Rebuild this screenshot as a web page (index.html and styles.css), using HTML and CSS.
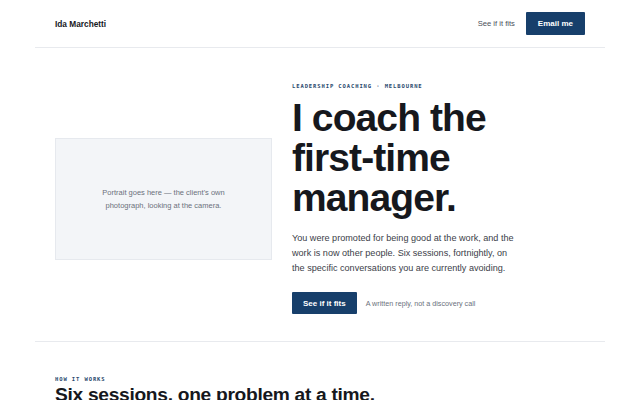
FILE: index.html
```html
<!DOCTYPE html>
<html lang="en">
<head>
<meta charset="utf-8">
<title>Ida Marchetti — Leadership coaching</title>
<link rel="stylesheet" href="styles.css">
</head>
<body>
<div class="page">
  <header class="site-header">
    <a class="brand" href="#">Ida Marchetti</a>
    <nav class="nav">
      <a class="nav-link" href="#">See if it fits</a>
      <a class="btn btn-small" href="#">Email me</a>
    </nav>
  </header>

  <section class="hero">
    <div class="portrait">
      <p>Portrait goes here — the client's own photograph, looking at the camera.</p>
    </div>
    <div class="hero-copy">
      <p class="eyebrow">Leadership coaching · Melbourne</p>
      <h1 class="hero-title">I coach the first-time manager.</h1>
      <p class="lede">You were promoted for being good at the work, and the work is now other people. Six sessions, fortnightly, on the specific conversations you are currently avoiding.</p>
      <div class="cta-row">
        <a class="btn" href="#">See if it fits</a>
        <span class="cta-note">A written reply, not a discovery call</span>
      </div>
    </div>
  </section>

  <section class="how">
    <p class="eyebrow">How it works</p>
    <h2 class="section-title">Six sessions, one problem at a time.</h2>
  </section>
</div>
</body>
</html>
```
FILE: styles.css
```css
* { box-sizing: border-box; }
html, body { margin: 0; padding: 0; background: #fff; }
body {
  font-family: "Liberation Sans", Arial, sans-serif;
  color: #16181d;
}
a { text-decoration: none; color: inherit; }
p { margin: 0; }

.page {
  width: 570px;
  margin: 0 auto;
}

.site-header {
  height: 48px;
  padding: 0 20px;
  display: flex;
  align-items: center;
  justify-content: space-between;
  border-bottom: 1px solid #e8eaee;
}
.brand {
  font-size: 8.3px;
  font-weight: 700;
  color: #16181d;
}
.nav {
  display: flex;
  align-items: center;
  gap: 11px;
}
.nav-link {
  font-size: 7.6px;
  color: #4a4f59;
}

.btn {
  display: inline-flex;
  align-items: center;
  justify-content: center;
  background: #173f6b;
  color: #fff;
  font-weight: 700;
  font-size: 8px;
  height: 23px;
  padding: 0 12px;
  border-radius: 1px;
}
.btn-small { height: 23px; padding: 0 12px; }

.hero {
  display: grid;
  grid-template-columns: 217px 1fr;
  column-gap: 20px;
  align-items: center;
  padding: 35px 20px 27px;
  border-bottom: 1px solid #e8eaee;
}
.portrait {
  height: 122px;
  background: #f3f5f8;
  border: 1px solid #e6e9ee;
  display: flex;
  align-items: center;
  justify-content: center;
  text-align: center;
  padding: 0 36px;
}
.portrait p {
  font-size: 7.5px;
  line-height: 13px;
  color: #6b717c;
}

.eyebrow {
  font-family: "DejaVu Sans Mono", "Liberation Mono", monospace;
  font-size: 5.5px;
  font-weight: 700;
  letter-spacing: 0.9px;
  text-transform: uppercase;
  color: #2b4a6e;
}
.hero-title {
  margin: 9px 0 13px;
  max-width: 215px;
  font-size: 39px;
  line-height: 40px;
  font-weight: 700;
  letter-spacing: -0.9px;
  color: #16181d;
}
.lede {
  font-size: 9.1px;
  line-height: 15px;
  color: #3b4048;
  max-width: 230px;
}
.cta-row {
  margin-top: 16px;
  display: flex;
  align-items: center;
  gap: 9px;
}
.cta-row .btn { height: 22px; padding: 0 11px; }
.cta-note {
  font-size: 7.2px;
  color: #6b717c;
}

.how {
  padding: 34px 20px 0;
}
.section-title {
  margin: 2px 0 0;
  font-size: 19.2px;
  line-height: 22px;
  font-weight: 700;
  letter-spacing: -0.3px;
}
```
